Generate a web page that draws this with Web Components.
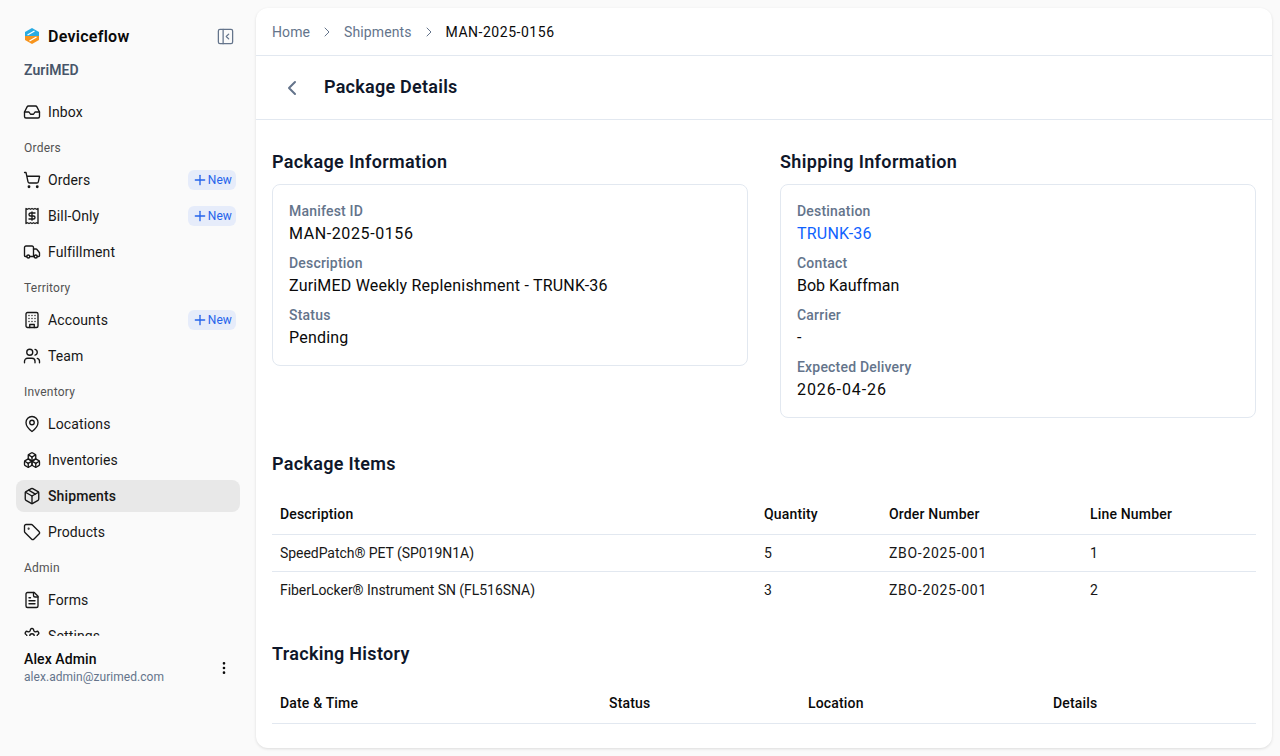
<!DOCTYPE html>
<html lang="en">
<head>
<meta charset="utf-8">
<title>Package Details</title>
<style>
  html, body { margin: 0; height: 100%; }
  body {
    display: flex;
    height: 756px;
    overflow: hidden;
    background: #fafafa;
    font-family: Roboto, "Liberation Sans", sans-serif;
    color: #0a0a0a;
  }
</style>
</head>
<body>
  <app-sidebar>
    <nav-item icon="inbox">Inbox</nav-item>
    <nav-label>Orders</nav-label>
    <nav-item icon="cart" new>Orders</nav-item>
    <nav-item icon="receipt" new>Bill-Only</nav-item>
    <nav-item icon="truck">Fulfillment</nav-item>
    <nav-label>Territory</nav-label>
    <nav-item icon="building" new>Accounts</nav-item>
    <nav-item icon="users">Team</nav-item>
    <nav-label>Inventory</nav-label>
    <nav-item icon="pin">Locations</nav-item>
    <nav-item icon="boxes">Inventories</nav-item>
    <nav-item icon="package" active>Shipments</nav-item>
    <nav-item icon="tag">Products</nav-item>
    <nav-label>Admin</nav-label>
    <nav-item icon="file">Forms</nav-item>
    <nav-item icon="settings">Settings</nav-item>
  </app-sidebar>

  <main-panel>
    <bread-crumbs slot="top" trail="Home|Shipments|MAN-2025-0156"></bread-crumbs>
    <page-header slot="top">Package Details</page-header>

    <div class="two" style="display:grid;grid-template-columns:1fr 1fr;gap:32px;align-items:start;margin-bottom:32px">
      <info-section title="Package Information">
        <info-field label="Manifest ID" style="--ls:.6px">MAN-2025-0156</info-field>
        <info-field label="Description">ZuriMED Weekly Replenishment - TRUNK-36</info-field>
        <info-field label="Status">Pending</info-field>
      </info-section>
      <info-section title="Shipping Information">
        <info-field label="Destination" link>TRUNK-36</info-field>
        <info-field label="Contact" style="--ls:0">Bob Kauffman</info-field>
        <info-field label="Carrier">-</info-field>
        <info-field label="Expected Delivery" style="--ls:.9px">2026-04-26</info-field>
      </info-section>
    </div>

    <data-table title="Package Items" widths="484,125,201,174"
      columns="Description|Quantity|Order Number|Line Number"
      rows="SpeedPatch® PET (SP019N1A)|5|ZBO-2025-001|1;FiberLocker® Instrument SN (FL516SNA)|3|ZBO-2025-001|2"></data-table>

    <data-table title="Tracking History" widths="329,199,245,211"
      columns="Date &amp; Time|Status|Location|Details"></data-table>
  </main-panel>

<script>
const ICONS = {
  inbox: '<polyline points="22 12 16 12 14 15 10 15 8 12 2 12"/><path d="M5.45 5.11 2 12v6a2 2 0 0 0 2 2h16a2 2 0 0 0 2-2v-6l-3.45-6.89A2 2 0 0 0 16.76 4H7.24a2 2 0 0 0-1.79 1.11z"/>',
  cart: '<circle cx="8" cy="21" r="1"/><circle cx="19" cy="21" r="1"/><path d="M2.05 2.05h2l2.66 12.42a2 2 0 0 0 2 1.58h9.78a2 2 0 0 0 1.95-1.57l1.65-7.43H5.12"/>',
  receipt: '<path d="M4 2v20l2-1 2 1 2-1 2 1 2-1 2 1 2-1 2 1V2l-2 1-2-1-2 1-2-1-2 1-2-1-2 1Z"/><path d="M16 8h-6a2 2 0 1 0 0 4h4a2 2 0 1 1 0 4H8"/><path d="M12 17.5v-11"/>',
  truck: '<path d="M14 18V6a2 2 0 0 0-2-2H4a2 2 0 0 0-2 2v11a1 1 0 0 0 1 1h2"/><path d="M15 18H9"/><path d="M19 18h2a1 1 0 0 0 1-1v-3.65a1 1 0 0 0-.22-.624l-3.48-4.35A1 1 0 0 0 17.52 8H14"/><circle cx="17" cy="18" r="2"/><circle cx="7" cy="18" r="2"/>',
  building: '<rect width="16" height="20" x="4" y="2" rx="2"/><path d="M9 22v-4h6v4"/><path d="M8 6h.01M16 6h.01M12 6h.01M12 10h.01M12 14h.01M16 10h.01M16 14h.01M8 10h.01M8 14h.01"/>',
  users: '<path d="M16 21v-2a4 4 0 0 0-4-4H6a4 4 0 0 0-4 4v2"/><circle cx="9" cy="7" r="4"/><path d="M22 21v-2a4 4 0 0 0-3-3.87"/><path d="M16 3.13a4 4 0 0 1 0 7.75"/>',
  pin: '<path d="M20 10c0 6-8 12-8 12s-8-6-8-12a8 8 0 0 1 16 0Z"/><circle cx="12" cy="10" r="3"/>',
  boxes: '<path d="M2.97 12.92A2 2 0 0 0 2 14.63v3.24a2 2 0 0 0 .97 1.71l3 1.8a2 2 0 0 0 2.06 0L12 19v-5.5l-5-3-4.03 2.42Z"/><path d="m7 16.5-4.74-2.85"/><path d="m7 16.5 5-3"/><path d="M7 16.5v5.17"/><path d="M12 13.5V19l3.97 2.38a2 2 0 0 0 2.06 0l3-1.8a2 2 0 0 0 .97-1.71v-3.24a2 2 0 0 0-.97-1.71L17 10.5l-5 3Z"/><path d="m17 16.5-5-3"/><path d="m17 16.5 4.74-2.85"/><path d="M17 16.5v5.17"/><path d="M7.97 4.42A2 2 0 0 0 7 6.13v4.37l5 3 5-3V6.13a2 2 0 0 0-.97-1.71l-3-1.8a2 2 0 0 0-2.06 0l-3 1.8Z"/><path d="M12 8 7.26 5.15"/><path d="m12 8 4.74-2.85"/><path d="M12 13.5V8"/>',
  package: '<path d="m7.5 4.27 9 5.15"/><path d="M21 8a2 2 0 0 0-1-1.73l-7-4a2 2 0 0 0-2 0l-7 4A2 2 0 0 0 3 8v8a2 2 0 0 0 1 1.73l7 4a2 2 0 0 0 2 0l7-4A2 2 0 0 0 21 16Z"/><path d="m3.3 7 8.7 5 8.7-5"/><path d="M12 22V12"/>',
  tag: '<path d="M12.586 2.586A2 2 0 0 0 11.172 2H4a2 2 0 0 0-2 2v7.172a2 2 0 0 0 .586 1.414l8.704 8.704a2.426 2.426 0 0 0 3.42 0l6.58-6.58a2.426 2.426 0 0 0 0-3.42z"/><circle cx="7.5" cy="7.5" r=".5" fill="currentColor"/>',
  file: '<path d="M15 2H6a2 2 0 0 0-2 2v16a2 2 0 0 0 2 2h12a2 2 0 0 0 2-2V7Z"/><path d="M14 2v4a2 2 0 0 0 2 2h4"/><path d="M10 9H8"/><path d="M16 13H8"/><path d="M16 17H8"/>',
  settings: '<path d="M12.22 2h-.44a2 2 0 0 0-2 2v.18a2 2 0 0 1-1 1.73l-.43.25a2 2 0 0 1-2 0l-.15-.08a2 2 0 0 0-2.73.73l-.22.38a2 2 0 0 0 .73 2.73l.15.1a2 2 0 0 1 1 1.72v.51a2 2 0 0 1-1 1.74l-.15.09a2 2 0 0 0-.73 2.73l.22.38a2 2 0 0 0 2.73.73l.15-.08a2 2 0 0 1 2 0l.43.25a2 2 0 0 1 1 1.73V20a2 2 0 0 0 2 2h.44a2 2 0 0 0 2-2v-.18a2 2 0 0 1 1-1.73l.43-.25a2 2 0 0 1 2 0l.15.08a2 2 0 0 0 2.73-.73l.22-.39a2 2 0 0 0-.73-2.73l-.15-.08a2 2 0 0 1-1-1.74v-.5a2 2 0 0 1 1-1.74l.15-.09a2 2 0 0 0 .73-2.73l-.22-.38a2 2 0 0 0-2.73-.73l-.15.08a2 2 0 0 1-2 0l-.43-.25a2 2 0 0 1-1-1.73V4a2 2 0 0 0-2-2z"/><circle cx="12" cy="12" r="3"/>'
};

function svg(inner, size, sw) {
  return `<svg xmlns="http://www.w3.org/2000/svg" width="${size}" height="${size}" viewBox="0 0 24 24" fill="none" stroke="currentColor" stroke-width="${sw || 2}" stroke-linecap="round" stroke-linejoin="round">${inner}</svg>`;
}

class AppSidebar extends HTMLElement {
  constructor() {
    super();
    const shadow = this.attachShadow({ mode: "open" });
    shadow.innerHTML = `
      <style>
        :host { display: flex; flex-direction: column; width: 256px; flex: none; height: 756px; background: #fafafa; }
        .brand { display: flex; align-items: center; height: 24px; padding: 24px 21.5px 0 24px; gap: 8px; }
        .brand b { font-size: 16px; font-weight: 600; letter-spacing: .27px; color: #0a0a0a; flex: 1; }
        .brand .toggle { display: flex; color: #64748b; }
        .org { padding: 11px 24px 0; height: 22px; line-height: 22px; font-size: 14px; font-weight: 600; color: #475569; letter-spacing: .1px; }
        nav { flex: 1; min-height: 0; overflow: hidden; padding: 15px 16px 0; display: flex; flex-direction: column; gap: 4px; }
        footer { height: 120px; flex: none; box-sizing: border-box; padding: 13px 24px 0 24px; display: flex; gap: 8px; }
        .who { flex: 1; }
        .name { font-size: 14px; font-weight: 500; line-height: 20px; color: #0a0a0a; letter-spacing: .1px; }
        .mail { font-size: 12px; line-height: 16px; color: #64748b; letter-spacing: .04px; }
        .more { display: flex; color: #0a0a0a; padding-top: 11px; height: 16px; }
      </style>
      <div class="brand">
        <svg width="16" height="16" viewBox="0 0 16 16">
          <path d="M8 0 15 4v4H1V4Z" fill="#29abe2"/>
          <path d="M1 8h14v4l-7 4-7-4Z" fill="#f7941d"/>
          <path d="M3.5 7 10.5 3M5.5 13 12.5 9" stroke="#fff" stroke-width="1.3"/>
        </svg>
        <b>Deviceflow</b>
        <span class="toggle">${svg('<rect width="18" height="18" x="3" y="3" rx="2"/><path d="M9 3v18"/><path d="m16 15-3-3 3-3"/>', 19, 1.6)}</span>
      </div>
      <div class="org">ZuriMED</div>
      <nav><slot></slot></nav>
      <footer>
        <div class="who">
          <div class="name">Alex Admin</div>
          <div class="mail">alex.admin@zurimed.com</div>
        </div>
        <span class="more">${svg('<circle cx="12" cy="5" r="1"/><circle cx="12" cy="12" r="1"/><circle cx="12" cy="19" r="1"/>', 16)}</span>
      </footer>
    `;
  }
}
customElements.define("app-sidebar", AppSidebar);

class NavLabel extends HTMLElement {
  constructor() {
    super();
    this.attachShadow({ mode: "open" }).innerHTML = `
      <style>
        :host { display: flex; align-items: center; flex: none; height: 24px; margin-top: 4px; padding: 0 8px; font-size: 12px; font-weight: 400; color: #525252; letter-spacing: .22px; }
      </style><slot></slot>`;
  }
}
customElements.define("nav-label", NavLabel);

class NavItem extends HTMLElement {
  constructor() {
    super();
    const shadow = this.attachShadow({ mode: "open" });
    const active = this.hasAttribute("active");
    const badge = this.hasAttribute("new")
      ? `<span class="new">${svg('<path d="M5 12h14"/><path d="M12 5v14"/>', 16)}New</span>` : "";
    shadow.innerHTML = `
      <style>
        :host { display: flex; flex: none; align-items: center; gap: 8px; height: 32px; padding: 0 4px 0 8px; border-radius: 8px; font-size: 14px; letter-spacing: .12px; color: #171717; ${active ? "background: #e8e8e8; font-weight: 500;" : ""} }
        svg { flex: none; display: block; }
        .ico { margin: 0 -1px; }
        .label { flex: 1; }
        .new { display: flex; align-items: center; height: 20px; padding: 0 4px; border-radius: 6px; background: #e6ecfa; color: #2563eb; font-size: 12px; letter-spacing: .1px; font-weight: 400; }
      </style>
      <span class="ico">${svg(ICONS[this.getAttribute("icon")], 18, 1.8)}</span>
      <span class="label"><slot></slot></span>
      ${badge}`;
  }
}
customElements.define("nav-item", NavItem);

class MainPanel extends HTMLElement {
  constructor() {
    super();
    this.attachShadow({ mode: "open" }).innerHTML = `
      <style>
        :host { display: flex; flex-direction: column; flex: 1; min-width: 0; height: 740px; margin: 8px 8px 8px 0; background: #fff; border-radius: 12px; box-shadow: 0 1px 3px rgba(0,0,0,.12); overflow: hidden; }
        .body { padding: 28px 16px 0; flex: 1; min-height: 0; }
      </style>
      <slot name="top"></slot>
      <div class="body"><slot></slot></div>`;
  }
}
customElements.define("main-panel", MainPanel);

class BreadCrumbs extends HTMLElement {
  connectedCallback() {
    const parts = this.getAttribute("trail").split("|");
    const html = parts.map((p, i) => i < parts.length - 1
      ? `<span class="link">${p}</span><span class="sep">${svg('<path d="m9 18 6-6-6-6"/>', 16, 1.5)}</span>`
      : `<span class="here">${p}</span>`).join("");
    this.attachShadow({ mode: "open" }).innerHTML = `
      <style>
        :host { display: flex; align-items: center; flex: none; height: 47px; padding: 0 16px; border-bottom: 1px solid #e2e8f0; font-size: 14px; letter-spacing: .1px; }
        .link { color: #64748b; }
        .here { color: #0a0a0a; letter-spacing: .53px; }
        .sep { display: flex; margin: 0 9px; color: #64748b; }
      </style>${html}`;
  }
}
customElements.define("bread-crumbs", BreadCrumbs);

class PageHeader extends HTMLElement {
  constructor() {
    super();
    this.attachShadow({ mode: "open" }).innerHTML = `
      <style>
        :host { display: flex; align-items: center; flex: none; height: 63px; padding: 0 16px; border-bottom: 1px solid #e2e8f0; }
        .back { display: flex; justify-content: center; width: 40px; margin-right: 12px; color: #64748b; }
        h1 { margin: 0 0 2px; font-size: 18px; font-weight: 600; line-height: 28px; color: #0f172a; letter-spacing: .25px; }
      </style>
      <span class="back">${svg('<path d="m15 18-6-6 6-6"/>', 24)}</span>
      <h1><slot></slot></h1>`;
  }
}
customElements.define("page-header", PageHeader);

class InfoSection extends HTMLElement {
  constructor() {
    super();
    this.attachShadow({ mode: "open" }).innerHTML = `
      <style>
        :host { display: block; }
        h2 { margin: 0 0 8px; font-size: 18px; font-weight: 600; line-height: 28px; color: #0f172a; letter-spacing: .36px; }
        .card { display: flex; flex-direction: column; gap: 8px; padding: 16px; border: 1px solid #e2e8f0; border-radius: 8px; background: #fff; }
      </style>
      <h2>${this.getAttribute("title")}</h2>
      <div class="card"><slot></slot></div>`;
  }
}
customElements.define("info-section", InfoSection);

class InfoField extends HTMLElement {
  constructor() {
    super();
    const color = this.hasAttribute("link") ? "#0f62fe" : "#0a0a0a";
    this.attachShadow({ mode: "open" }).innerHTML = `
      <style>
        :host { display: block; }
        .l { font-size: 14px; font-weight: 500; line-height: 20px; color: #64748b; letter-spacing: .2px; }
        .v { font-size: 16px; height: 24px; line-height: 26px; color: ${color}; letter-spacing: var(--ls, .2px); }
      </style>
      <div class="l">${this.getAttribute("label")}</div>
      <div class="v"><slot></slot></div>`;
  }
}
customElements.define("info-field", InfoField);

class DataTable extends HTMLElement {
  connectedCallback() {
    const cols = this.getAttribute("columns").split("|");
    const widths = this.getAttribute("widths").split(",");
    const rows = (this.getAttribute("rows") || "").split(";").filter(Boolean).map(r => r.split("|"));
    this.attachShadow({ mode: "open" }).innerHTML = `
      <style>
        :host { display: block; margin-bottom: 32px; }
        h2 { margin: 0 0 16px; font-size: 18px; font-weight: 600; line-height: 28px; color: #0f172a; letter-spacing: .3px; }
        table { width: 100%; table-layout: fixed; border-collapse: collapse; font-size: 14px; color: #171717; }
        th { height: 40px; padding: 0 8px; text-align: left; font-weight: 500; color: #0a0a0a; letter-spacing: .17px; border-bottom: 1px solid #e2e8f0; box-sizing: border-box; }
        td { padding: 8px; line-height: 20px; letter-spacing: -.05px; border-bottom: 1px solid #e2e8f0; }
        td:nth-child(3) { letter-spacing: .7px; }
        tr:last-child td { border-bottom: 0; }
      </style>
      <h2>${this.getAttribute("title")}</h2>
      <table>
        <colgroup>${widths.map(w => `<col style="width:${w}px">`).join("")}</colgroup>
        <thead><tr>${cols.map(c => `<th>${c}</th>`).join("")}</tr></thead>
        <tbody>${rows.map(r => `<tr>${r.map(c => `<td>${c}</td>`).join("")}</tr>`).join("")}</tbody>
      </table>`;
  }
}
customElements.define("data-table", DataTable);
</script>
</body>
</html>
